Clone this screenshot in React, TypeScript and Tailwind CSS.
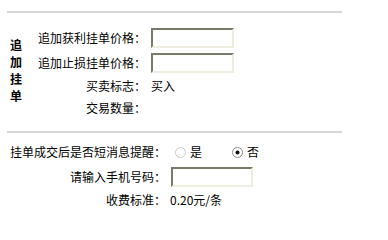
import React from "react";

const Field: React.FC = () => (
  <div className="h-[20px] w-[83px] border-2 border-t-[#7a786b] border-l-[#7a786b] border-r-[#efeddf] border-b-[#efeddf] bg-white" />
);

const Radio: React.FC<{ checked?: boolean }> = ({ checked }) => (
  <svg width="11" height="11" viewBox="0 0 11 11" className="shrink-0">
    <circle cx="5.5" cy="5.5" r="5" fill="#ffffff" stroke={checked ? "#8a8a80" : "#c8c8c0"} strokeWidth="1" />
    {checked && <circle cx="5.5" cy="5.5" r="2" fill="#111111" />}
  </svg>
);

export default function App() {
  const orderRows = [
    { label: "追加获利挂单价格：", field: true },
    { label: "追加止损挂单价格：", field: true },
    { label: "买卖标志：", value: "买入" },
    { label: "交易数量：", value: "" },
  ];

  return (
    <div
      className="w-[388px] h-[215px] bg-white text-[12px] text-black overflow-hidden"
      style={{ fontFamily: '"Noto Sans CJK SC", "Noto Sans", sans-serif' }}
    >
      <div className="pt-[11px] pl-[7px]">
        <div className="h-[2px] w-[335px] bg-[#d6d6d6]" />
      </div>

      {/* 追加挂单 */}
      <div className="mt-[12px] flex items-center">
        <div className="w-[24px] pl-[10px] -mt-[4px] flex flex-col font-bold leading-[17px]">
          <span>追</span>
          <span>加</span>
          <span>挂</span>
          <span>单</span>
        </div>
        <div className="flex flex-col">
          {orderRows.map((row) => (
            <div
              key={row.label}
              className={`flex items-center ${row.field ? "h-[25px]" : "h-[22px]"}`}
            >
              <span className="w-[122px] text-right whitespace-nowrap">{row.label}</span>
              <div className="ml-[5px]">{row.field ? <Field /> : <span>{row.value}</span>}</div>
            </div>
          ))}
        </div>
      </div>

      <div className="mt-[12px] pl-[7px]">
        <div className="h-[2px] w-[335px] bg-[#d6d6d6]" />
      </div>

      {/* 短信提醒 */}
      <div className="mt-[7px] flex flex-col pl-[10px]">
        <div className="flex items-center h-[24px]">
          <span className="w-[156px] text-right whitespace-nowrap">挂单成交后是否短消息提醒：</span>
          <div className="ml-[9px] flex items-center">
            <Radio />
            <span className="ml-[4px]">是</span>
          </div>
          <div className="ml-[30px] flex items-center">
            <Radio checked />
            <span className="ml-[4px]">否</span>
          </div>
        </div>
        <div className="flex items-center h-[25px]">
          <span className="w-[156px] text-right whitespace-nowrap">请输入手机号码：</span>
          <div className="ml-[5px]">
            <div className="h-[20px] w-[82px] border-2 border-t-[#7a786b] border-l-[#7a786b] border-r-[#efeddf] border-b-[#efeddf] bg-white" />
          </div>
        </div>
        <div className="flex items-center h-[22px]">
          <span className="w-[156px] text-right whitespace-nowrap">收费标准：</span>
          <span className="ml-[4px]">0.20元/条</span>
        </div>
      </div>
    </div>
  );
}
